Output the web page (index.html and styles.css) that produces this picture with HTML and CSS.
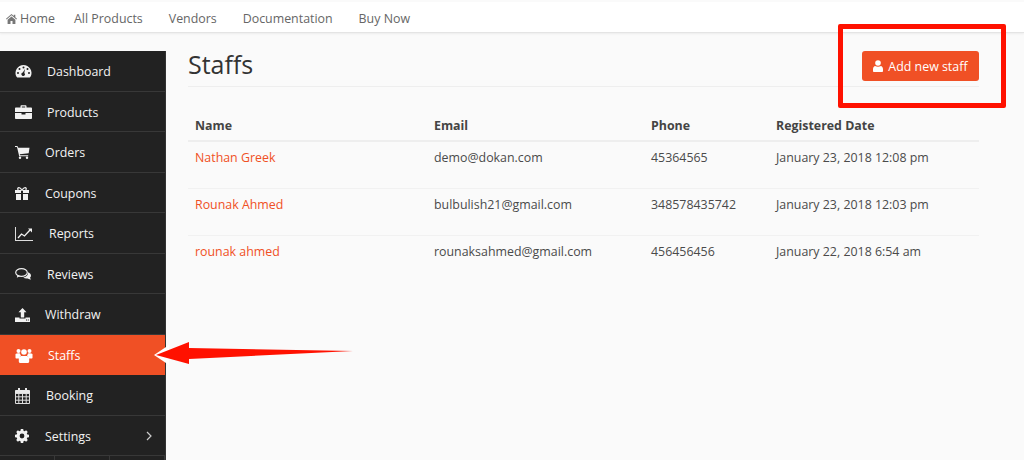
FILE: index.html
```html
<!DOCTYPE html>
<html lang="en">
<head>
  <meta charset="UTF-8" />
  <title>Staffs</title>
  <link rel="stylesheet" href="styles.css">
</head>
<body>

  <nav class="topbar">
    <a href="#" class="home-link">
      <svg width="11" height="10" viewBox="0 0 11 10"><path fill="#777" d="M5.500 0 7.800 2V.8H9.300V3.300L11 4.800l-.6.600L5.500 1.300.6 5.400 0 4.800zM1.600 5.800 5.500 2.500 9.400 5.800V10H6.500V7H4.500v3H1.600z"/></svg>
      Home
    </a>
    <a href="#">All Products</a>
    <a href="#">Vendors</a>
    <a href="#">Documentation</a>
    <a href="#">Buy Now</a>
  </nav>

  <div class="layout">
    <!-- Sidebar -->
    <ul class="sidebar">
      <li>
        <svg width="17" height="13" viewBox="0 0 17 13"><path fill="#f2f2f2" fill-rule="evenodd" d="M8.500 0a8 8 0 0 1 7.300 11.300l-1 1.200H2.200l-1-1.200A8 8 0 0 1 8.500 0zM8.500 1.500a1 1 0 1 0 0 2 1 1 0 0 0 0-2zM4.500 3a1 1 0 1 0 0 2 1 1 0 0 0 0-2zM12.500 3a1 1 0 1 0 0 2 1 1 0 0 0 0-2zM3 7a1 1 0 1 0 0 2 1 1 0 0 0 0-2zM14 7a1 1 0 1 0 0 2 1 1 0 0 0 0-2zM10 4 7.800 7.600a1.700 1.700 0 1 0 1.500.4z"/></svg>
        Dashboard
      </li>
      <li>
        <svg width="17" height="14" viewBox="0 0 17 14"><path fill="#f2f2f2" fill-rule="evenodd" d="M5.500 2.500V1.200C5.500.6 6 .2 6.500.2h4c.5 0 1 .4 1 1v1.300H16c.5 0 1 .4 1 1v3.500H0V3.500c0-.6.500-1 1-1zM6.800 1.400v1.100h3.400V1.400zM0 8h6.500v1.500h4V8H17v5c0 .6-.5 1-1 1H1c-.5 0-1-.4-1-1z"/></svg>
        Products
      </li>
      <li>
        <svg width="15" height="13" viewBox="0 0 15 13"><path fill="#f2f2f2" d="M0 0h2.400l.9 1.800H14.500l-.8 5.500L4.800 8.200l.2 1h8.200v1H4.200L2 1H0z"/><circle fill="#f2f2f2" cx="5" cy="11.700" r="1.200"/><circle fill="#f2f2f2" cx="12" cy="11.700" r="1.200"/></svg>
        Orders
      </li>
      <li>
        <svg width="15" height="13" viewBox="0 0 15 13"><path fill="#f2f2f2" fill-rule="evenodd" d="M3.500 0C5 0 6.500 1 7 2.500 7.500 1 9 0 10.500 0c1.500.2 1.800 2 .9 3H14v3H8V3.800H6V6H0V3h2.600c-.9-1-.6-2.800.9-3zM4 1.200c-.9 0-.9 1.800.2 1.800h1.800C5.500 2 4.800 1.200 4 1.200zM10 1.200c-.8 0-1.500.8-2 1.800h1.800c1.100 0 1.100-1.800.2-1.800z"/><path fill="#f2f2f2" d="M1 7h5v6H1zM8 7h5v6H8z"/></svg>
        Coupons
      </li>
      <li>
        <svg width="19" height="14" viewBox="0 0 19 14"><path fill="#ddd" d="M0 0h1v13h17v1H0z"/><path fill="none" stroke="#f2f2f2" stroke-width="1.300" d="M3 11l3.500-4 3 2 5.500-6"/><path fill="#f2f2f2" d="M13 1.500h4V5.500z"/></svg>
        Reports
      </li>
      <li>
        <svg width="17" height="13" viewBox="0 0 17 13"><ellipse fill="none" stroke="#eee" stroke-width="1.200" cx="6.500" cy="4.500" rx="5.800" ry="3.900"/><path fill="#eee" d="M2.500 7 1.800 9.800 5.300 8zM13 4.200c2 .8 3.200 2 3 3.500-.1 1-.6 1.500-.9 1.800l.7 2.300-3.200-1.300c-1.600.3-3.200 0-4.300-1 2.500-.3 5-2 4.700-5.300z"/></svg>
        Reviews
      </li>
      <li>
        <svg width="15" height="14" viewBox="0 0 15 14"><path fill="#f2f2f2" fill-rule="evenodd" d="M7.500 0 11.500 4.300H9.200V9.500H5.800V4.300H3.500zM0 9.500h4.500v1h6v-1H15V14H0zM11 11.500v1h1v-1zM12.800 11.500v1h1v-1z"/></svg>
        Withdraw
      </li>
      <li class="active">
        <svg width="18" height="15" viewBox="0 0 18 15"><g fill="#fff"><circle cx="3.500" cy="3" r="2"/><circle cx="14.500" cy="3" r="2"/><circle cx="9" cy="4" r="2.800"/><path d="M.5 6c1-.8 2.800-1 4.500-.6.200.8.600 1.500 1.100 2.100-1.200.5-2 1.500-2.200 3H1.500c-.7 0-1-.4-1-1zM17.500 6c-1-.8-2.800-1-4.500-.6-.2.8-.6 1.500-1.100 2.100 1.200.5 2 1.500 2.200 3h2.400c.7 0 1-.4 1-1zM6 8h6c1.300.3 2.200 1.500 2.200 3v2.500c0 .8-.7 1.500-1.500 1.500H5.300c-.8 0-1.500-.7-1.500-1.500V11c0-1.500.9-2.700 2.200-3z"/></g></svg>
        Staffs
      </li>
      <li>
        <svg width="16" height="16" viewBox="0 0 16 16"><path fill="#e8e8e8" d="M3 0h2v2h5V0h2v2h2c.6 0 1 .4 1 1v3H0V3c0-.6.400-1 1-1h2z"/><path fill="none" stroke="#ddd" d="M.5 5.500h14v10H.5zM3.800 6v9M7.500 6v9M11.200 6v9M1 8.800h13M1 12.200h13"/></svg>
        Booking
      </li>
      <li>
        <svg width="15" height="14" viewBox="0 0 15 14"><path fill="#f2f2f2" fill-rule="evenodd" d="M5.800 0h2.400l.3 1.700 1.200.5 1.400-1 1.700 1.700-1 1.400.5 1.200 1.700.3v2.400l-1.700.3-.5 1.200 1 1.400-1.700 1.700-1.400-1-1.200.5L8.200 14H5.800l-.3-1.700-1.200-.5-1.400 1L1.200 11.100l1-1.400-.5-1.200L0 8.200V5.800l1.700-.3.500-1.200-1-1.400L2.900 1.200l1.400 1 1.200-.5zM7 4.600a2.400 2.400 0 1 0 0 4.800 2.400 2.400 0 0 0 0-4.800z"/></svg>
        Settings
        <svg class="chevron" width="6" height="10" viewBox="0 0 6 10"><path fill="none" stroke="#ccc" stroke-width="1.200" d="M1 1l4 4-4 4"/></svg>
      </li>
      <li class="sidebar-foot">
        <span></span>
        <span></span>
        <span></span>
      </li>
    </ul>

    <!-- Content -->
    <main class="content">
      <header class="page-head">
        <h1>Staffs</h1>
        <a href="#" class="add-btn">
          <svg width="10" height="12" viewBox="0 0 10 12"><circle fill="#fff" cx="5" cy="3" r="2.800"/><path fill="#fff" d="M2 6c1.800 1 4.200 1 6 0 1.300.3 2 1.700 2 3.500V11c0 .6-.5 1-1 1H1c-.5 0-1-.4-1-1V9.500C0 7.700.7 6.300 2 6z"/></svg>
          Add new staff
        </a>
      </header>

      <table class="staff-table">
        <thead>
          <tr>
            <th class="col-name">Name</th>
            <th class="col-email">Email</th>
            <th class="col-phone">Phone</th>
            <th>Registered Date</th>
          </tr>
        </thead>
        <tbody>
          <tr>
            <td><a href="#">Nathan Greek</a></td>
            <td>demo@dokan.com</td>
            <td>45364565</td>
            <td>January 23, 2018 12:08 pm</td>
          </tr>
          <tr>
            <td><a href="#">Rounak Ahmed</a></td>
            <td>bulbulish21@gmail.com</td>
            <td>348578435742</td>
            <td>January 23, 2018 12:03 pm</td>
          </tr>
          <tr>
            <td><a href="#">rounak ahmed</a></td>
            <td>rounaksahmed@gmail.com</td>
            <td>456456456</td>
            <td>January 22, 2018 6:54 am</td>
          </tr>
        </tbody>
      </table>
    </main>
  </div>

  <!-- Annotations drawn over the screenshot -->
  <div class="callout-box"></div>
  <svg class="callout-arrow" width="200" height="30" viewBox="0 0 200 30">
    <path fill="#fff" d="M-1 15 14 5 14 25z"/>
    <path fill="#ff1100" d="M1 15 34 2 34 8 198 11 34 19 34 24z"/>
  </svg>

</body>
</html>
```

FILE: styles.css
```css
* {
  box-sizing: border-box;
}

html, body {
  height: 100%;
}

body {
  margin: 0;
  background-color: #fafafa;
  font-family: "Open Sans", Arial, sans-serif;
  font-size: 12.4px;
  color: #4a4a4a;
  overflow: hidden;
  position: relative;
}

a {
  text-decoration: none;
}

/* Top nav */
.topbar {
  display: flex;
  align-items: center;
  gap: 26px;
  height: 33px;
  padding: 3px 0 0 6px;
  background-color: #fff;
  border-top: 2px solid #fafafa;
  border-bottom: 1px solid #e4e4e4;
  box-shadow: 0 1px 2px rgba(0, 0, 0, 0.06);
}

.topbar a {
  color: #666;
}

.topbar .home-link {
  display: flex;
  align-items: center;
  gap: 3px;
  margin-right: -7px;
}

.layout {
  display: flex;
  align-items: flex-start;
  padding-top: 18px;
}

/* Sidebar */
.sidebar {
  list-style: none;
  flex: 0 0 166px;
  height: 420px;
  margin: 0;
  padding: 0;
  background-color: #222;
  border-right: 1px solid #333;
}

.sidebar li {
  display: flex;
  align-items: center;
  gap: 15px;
  height: 40.5px;
  padding: 1.5px 13px 0 15px;
  border-bottom: 1px solid #383838;
  color: #f2f2f2;
  font-weight: 500;
}

.sidebar li.active {
  background-color: #f05025;
  border-bottom-color: #f05025;
  color: #fff;
}

.sidebar .chevron {
  margin-left: auto;
}

.sidebar .sidebar-foot {
  gap: 0;
  height: 10px;
  padding: 0;
  border-bottom: none;
}

.sidebar-foot span {
  width: 55px;
  height: 100%;
  border-right: 1px solid #383838;
}

/* Content */
.content {
  flex: 1;
  padding: 0 45px 0 22px;
}

.page-head {
  display: flex;
  align-items: flex-start;
  justify-content: space-between;
  height: 36px;
  border-bottom: 1px solid #eee;
}

.page-head h1 {
  margin: 0;
  color: #333;
  font-size: 25px;
  font-weight: 400;
  line-height: 27px;
}

.add-btn {
  display: flex;
  align-items: center;
  gap: 5px;
  height: 30px;
  padding: 0 11.5px;
  background-color: #f05025;
  border-radius: 3px;
  color: #fff;
}

.staff-table {
  width: 100%;
  margin-top: 19px;
  border-collapse: collapse;
}

.staff-table th {
  height: 35px;
  padding: 4px 7px 0;
  border-bottom: 2px solid #eee;
  color: #444;
  font-weight: 700;
  text-align: left;
}

.staff-table td {
  height: 47px;
  padding: 7px 7px 0;
  border-bottom: 1px solid #f1f1f1;
  vertical-align: top;
}

.staff-table tr:last-child td {
  border-bottom: none;
}

.staff-table td a {
  color: #f05025;
}

.col-name {
  width: 239px;
}

.col-email {
  width: 217px;
}

.col-phone {
  width: 125px;
}

/* Annotations */
.callout-box {
  position: absolute;
  left: 838px;
  top: 24px;
  width: 168px;
  height: 84px;
  border: 5px solid #ff1100;
  border-radius: 2px;
}

.callout-arrow {
  position: absolute;
  left: 155px;
  top: 340px;
  overflow: visible;
}
```
